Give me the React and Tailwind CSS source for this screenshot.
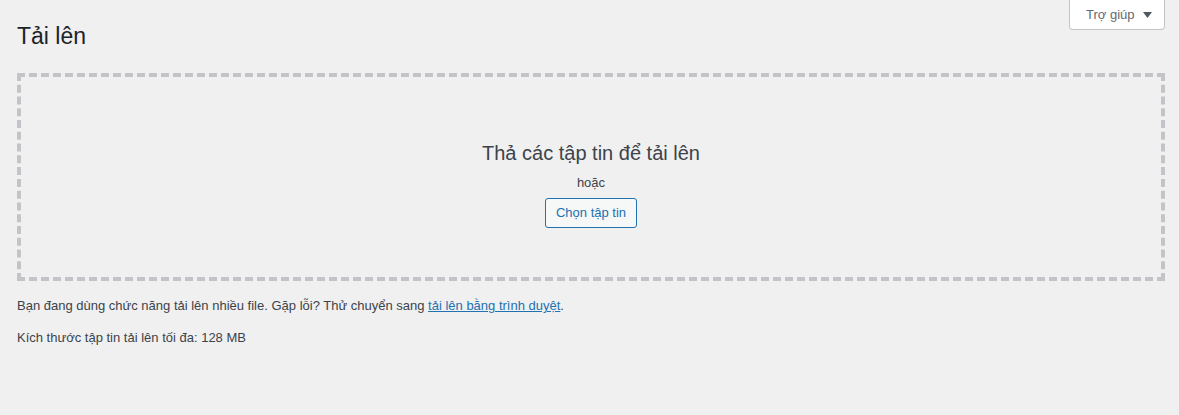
export default function App() {
  return (
    <div className="min-h-[415px] bg-[#f0f0f1] pl-[17px] pr-[14px] font-['Liberation_Sans',_Arial,_sans-serif] text-[13px] text-[#3c434a]">
      <div className="flex items-start justify-between">
        <h1 className="pt-[21px] text-[23px] leading-[30px] font-normal text-[#1d2327]">Tải lên</h1>
        <button
          type="button"
          className="flex h-[30px] w-[96px] items-center gap-[8px] rounded-b-[4px] border border-t-0 border-[#c3c4c7] bg-white pl-[16px] text-[13px] text-[#646970]"
        >
          <span>Trợ giúp</span>
          <svg width="9" height="6" viewBox="0 0 9 6" className="text-[#50575e]">
            <path d="M0 0h9L4.5 6z" fill="currentColor" />
          </svg>
        </button>
      </div>

      <div className="mt-[22px] box-border h-[208px] border-4 border-dashed border-[#c3c4c7]">
        <div className="flex flex-col items-center pt-[62px]">
          <p className="text-[20px] leading-[28px]">Thả các tập tin để tải lên</p>
          <p className="mt-[6px] leading-[20px]">hoặc</p>
          <button
            type="button"
            className="mt-[5px] h-[30px] rounded-[3px] border border-[#2271b1] bg-[#f6f7f7] px-[10px] text-[13px] text-[#2271b1]"
          >
            Chọn tập tin
          </button>
        </div>
      </div>

      <p className="mt-[15px] leading-[20px]">
        Bạn đang dùng chức năng tải lên nhiều file. Gặp lỗi? Thử chuyển sang{" "}
        <a href="#" className="text-[#2271b1] underline">tải lên bằng trình duyệt</a>.
      </p>
      <p className="mt-[12px] leading-[20px]">Kích thước tập tin tải lên tối đa: 128 MB</p>
    </div>
  );
}
